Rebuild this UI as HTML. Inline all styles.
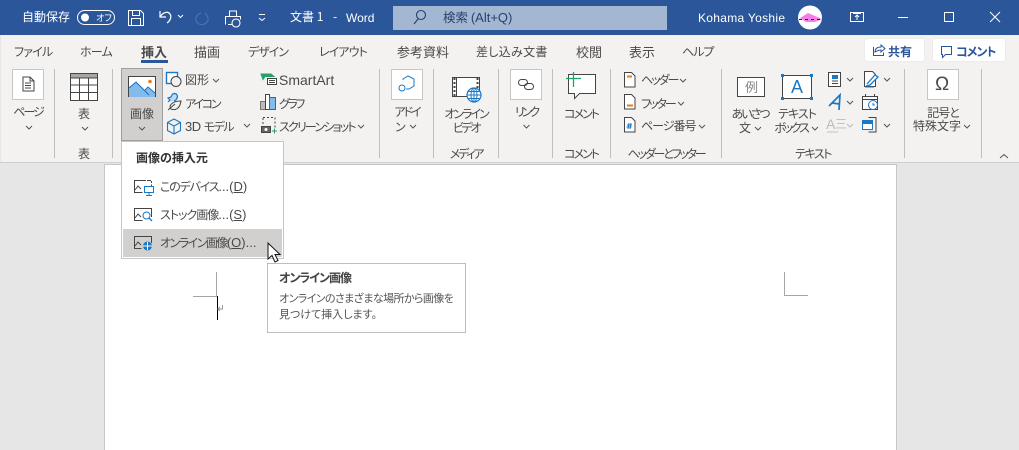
<!DOCTYPE html>
<html lang="ja"><head><meta charset="utf-8"><style>
html,body{margin:0;padding:0}
#r{position:relative;width:1019px;height:450px;overflow:hidden;background:#e6e6e6;font-family:"Liberation Sans","Noto Sans CJK JP",sans-serif;color:#4a4a4a}
#r div{position:absolute}
.t{white-space:nowrap;font-size:12px;line-height:16px;font-family:"Noto Sans CJK JP","Liberation Sans",sans-serif;font-feature-settings:"palt"}
.c{text-align:center;transform:translateX(-50%)}
.w{color:#fff}
.l,.l2{font-family:"Liberation Sans","Noto Sans CJK JP",sans-serif}
.l2{font-size:13px;letter-spacing:0}
u{text-underline-offset:1px}
svg{position:absolute;left:0;top:0}
</style></head><body><div id="r">
<div style="left:0;top:0;width:1019px;height:35px;background:#2b579a"></div>
<div style="left:1px;top:35px;width:1018px;height:127px;background:#f3f2f1"></div>
<div style="left:0;top:162px;width:1019px;height:1px;background:#d0cfce"></div>
<div style="left:105px;top:165px;width:791px;height:290px;background:#fff;outline:1px solid #c6c6c6"></div>
<div style="left:393px;top:6px;width:274px;height:24px;background:#a3b7d2"></div>
<div style="left:865px;top:39px;width:59px;height:22px;background:#fff;border-radius:2px;box-shadow:0 0 1px #ccc"></div>
<div style="left:933px;top:39px;width:72px;height:22px;background:#fff;border-radius:2px;box-shadow:0 0 1px #ccc"></div>
<div style="left:141px;top:60px;width:27px;height:3px;background:#2b579a"></div>
<div style="left:121px;top:68px;width:40px;height:71px;background:#d2d0ce;border:1px solid #a19f9d"></div>

<svg width="1019" height="450" fill="none" stroke-width="1">
<!-- titlebar icons -->
<g stroke="#fff">
<rect x="77.500" y="10.500" width="37" height="14" rx="7"/>
<circle cx="85" cy="17.500" r="3.500" fill="#fff"/>
<path d="M128.500 10.500h12l3 3v12h-15zM132.500 10.500v5h7v-5M131.500 25.500v-7h9v7"/>
<path d="M160 11v6h6M160 17c3-5 8-6 10-3 2 3 0 7-3 9" stroke-width="1.200"/>
<path d="M178 15l2.500 2.500 2.500-2.500M259 14.500h6M259 18l3 2.500 3-2.500"/>
<path d="M229.500 16v-5h7v5M225.500 24.500v-8h15v3M228 24.500h4"/>
<circle cx="236" cy="23" r="4" stroke-width="1.100"/>
<rect x="850.500" y="12.500" width="13" height="9"/>
<path d="M853 13.500h8M857 20v-5m-2 2l2-2 2 2" stroke-width="1"/>
<path d="M898 17.500h10"/><rect x="944.500" y="12.500" width="9" height="9"/>
<path d="M990 12l10 10m0-10l-10 10"/>
</g>
<path d="M201 13c-6 2-7 8-2 11 5 2 10-2 9-6-.5-2-1-3-3-5" stroke="#4b73ad" stroke-width="1.200"/>
<circle cx="810" cy="17.500" r="12" fill="#fff"/>
<path d="M800 18l5-3 3-2 7 3 7 3-7 3h-9z" fill="#f57de8"/><path d="M799 19.500h23" stroke="#222" stroke-dasharray="3 3"/>
<circle cx="421" cy="15" r="4.500" stroke="#27426e" stroke-width="1.100"/><path d="M418 19l-4 5" stroke="#27426e" stroke-width="1.200"/>
<!-- share / comment -->
<path d="M873.500 47v8.500h10v-3M875 52c0-4 3-5 6-5v-2l4 3.500-4 3.500v-2c-3 0-4 1-6 2z" stroke="#2b579a"/>
<path d="M941.500 46.500h10v8h-6l-3 3v-3h-1z" stroke="#2b579a"/>
<!-- separators -->
<g fill="#c0bfbe" stroke="none"><rect x="54" y="69" width="1" height="89"/><rect x="112" y="69" width="1" height="89"/><rect x="379" y="69" width="1" height="89"/><rect x="433" y="69" width="1" height="89"/><rect x="498" y="69" width="1" height="89"/><rect x="552" y="69" width="1" height="89"/><rect x="610" y="69" width="1" height="89"/><rect x="721" y="69" width="1" height="89"/><rect x="904" y="69" width="1" height="89"/><rect x="981" y="69" width="1" height="89"/></g>
<!-- white icon boxes -->
<g fill="#fff" stroke="#c8c6c4"><rect x="12.500" y="69.500" width="31" height="30"/><rect x="391.500" y="69.500" width="31" height="30"/><rect x="510.500" y="69.500" width="31" height="30"/><rect x="927.500" y="69.500" width="31" height="30"/></g>
<!-- page -->
<path d="M23 77h7l4 4v10H23zM30 77v4h4M25 83h6M25 85.500h6M25 88h6" stroke="#444"/>
<!-- table -->
<rect x="70.500" y="73.500" width="27" height="27" stroke="#444" fill="#fff"/><rect x="71" y="74" width="26" height="4" fill="#a6a6a6"/>
<path d="M71 78h26M71 85h26M71 92.500h26M79.500 78v22M88.500 78v22" stroke="#444"/>
<!-- picture -->
<rect x="128.500" y="76.500" width="27" height="20" fill="#fff" stroke="#444"/>
<path d="M129 93v-6l7-5 9 8 3-3 7 6v4h-26z" fill="#83bcec"/><path d="M129 88l7-6 13 13M145 90l3-3 7 6" stroke="#1b6fb9"/>
<circle cx="150" cy="81.500" r="1.800" fill="#e97b1c"/>
<!-- shapes -->
<rect x="166.500" y="72.500" width="11" height="11" fill="#fff" stroke="#1b78c4" stroke-width="1.400"/><circle cx="176" cy="81.500" r="5" fill="#f3f2f1" stroke="#444"/>
<!-- icons -->
<path d="M174 101c3-1 4-4 3-6-1-2-4-2-5 0l-1 2-3 1 2 2-2 2" fill="#bcdcf5" stroke="#1b78c4" stroke-width="1.200"/><path d="M171 109c-3-3 1-8 10-8-1 7-5 10-10 8zm-3 1l7-6" fill="#f3f2f1" stroke="#444"/>
<!-- 3d -->
<path d="M174 119l6.500 3.500v8l-6.500 3.500-6.500-3.500v-8zM167.500 122.500l6.500 3.500 6.500-3.500M174 126v8" stroke="#1b78c4" stroke-width="1.100"/>
<!-- smartart -->
<path d="M261 74h10l3 2.500h-9l-2 3z" fill="#21a366" stroke="#21a366"/><rect x="267.500" y="78.500" width="9" height="6" fill="#fff" stroke="#444"/><path d="M269 80.500h6M269 82.500h6" stroke="#444"/>
<!-- chart -->
<rect x="260.500" y="101.500" width="5" height="8" fill="#bbb" stroke="#777"/><rect x="265.500" y="94.500" width="4" height="15" fill="#fff" stroke="#444"/><rect x="269.500" y="97.500" width="6" height="12" fill="#83bcec" stroke="#1b6fb9"/>
<!-- screenshot -->
<path d="M263 117.500h12v10" stroke="#444" stroke-dasharray="2 2"/><path d="M263 118v6" stroke="#444" stroke-dasharray="2 2"/>
<rect x="261.500" y="126.500" width="9" height="6" fill="#666" stroke="#444"/><circle cx="266" cy="129.500" r="1.500" fill="#fff"/><path d="M272 131h5M274.500 128.500v5" stroke="#21a366"/>
<!-- addin -->
<path d="M403 80v-1l5-3 6 3v7l-5 3h-3" stroke="#1b78c4"/><circle cx="402" cy="88" r="3" stroke="#1b78c4"/>
<!-- video -->
<rect x="452.500" y="77.500" width="27" height="19" fill="#fff" stroke="#444"/><path d="M454.500 78v18M477.500 78v18" stroke="#444" stroke-width="2" stroke-dasharray="2 2"/><path d="M456.500 78v18" stroke="#444"/>
<circle cx="474" cy="95" r="7" fill="#fff" stroke="#1b78c4" stroke-width="1.200"/><path d="M467 95h14M474 88v14M468.500 91.500h11M468.500 98.500h11" stroke="#1b78c4"/><ellipse cx="474" cy="95" rx="3" ry="7" stroke="#1b78c4"/>
<!-- link -->
<rect x="518.500" y="79.500" width="9" height="6" rx="3" stroke="#444"/><rect x="524.500" y="83.500" width="9" height="6" rx="3" stroke="#444"/>
<!-- comment -->
<path d="M568.500 74.500h27v19h-16l-5 5v-5h-6z" fill="#fff" stroke="#444"/><path d="M566 78.500h15M573.500 72v15" stroke="#21a366" stroke-width="1.300"/>
<!-- header/footer/page no -->
<g fill="#fff" stroke="#444"><path d="M624.500 72.500h7l3.500 3.500v11h-10.500z"/><path d="M624.500 94.500h7l3.500 3.500v11h-10.500z"/><path d="M624.500 117.500h7l3.500 3.500v11h-10.500z"/></g>
<path d="M627 76.500h5" stroke="#e97b1c" stroke-width="2"/><path d="M627 105.500h6" stroke="#e97b1c" stroke-width="2"/>
<path d="M629 123l-1 6M631 123l-1 6M627 125h5M626.500 127h5" stroke="#1b78c4"/>
<!-- text group -->
<rect x="737.500" y="77.500" width="27" height="19" fill="#fff" stroke="#444"/>
<rect x="782.500" y="75.500" width="29" height="23" fill="#fff" stroke="#444"/>
<g fill="#1b78c4"><rect x="781" y="74" width="3" height="3"/><rect x="810" y="74" width="3" height="3"/><rect x="781" y="97" width="3" height="3"/><rect x="810" y="97" width="3" height="3"/></g>
<path d="M828.500 72.500h12v14h-12z" fill="#fff" stroke="#444"/><rect x="832" y="75" width="6" height="4" fill="#1b78c4"/><path d="M832 81h6M832 83.500h6" stroke="#444"/>
<path d="M829 106l11-11-1 15M832.500 103l6.500 1" stroke="#1b78c4" stroke-width="1.700"/>
<path d="M827 132h11" stroke="#c0bfbe"/>
<path d="M864.500 71.500h8l3 3v12h-11z" fill="#fff" stroke="#444"/><path d="M867 84l8-9 3 2-8 8-4 1" fill="#fff" stroke="#1b78c4" stroke-width="1.300"/><path d="M865 87h9" stroke="#1b78c4"/>
<rect x="862.500" y="96.500" width="15" height="13" fill="#fff" stroke="#444"/><path d="M863 99.500h14M865.500 94v3M874.500 94v3" stroke="#444"/><circle cx="873" cy="105" r="4.500" fill="#fff" stroke="#1b78c4"/><path d="M873 103v2h2" stroke="#1b78c4"/>
<path d="M868.500 117.500h7.500v14.500h-7.500" stroke="#444"/><rect x="862.500" y="120.500" width="10" height="9" fill="#fff" stroke="#1b78c4"/><rect x="863" y="121" width="9" height="3" fill="#1b78c4"/>
<!-- chevrons -->
<g stroke="#555"><path d="M26 126l3 3 3-3M82 127l3 3 3-3M139 127l3 3 3-3M213 79l3 3 3-3M244 124l3 3 3-3M358 125l3 3 3-3M410 125l3 3 3-3M523.500 125l3 3 3-3M680 79l3 3 3-3M678 102l3 3 3-3M699 125l3 3 3-3M755 127l3 3 3-3M812 127l3 3 3-3M847 78l3 3 3-3M847 101l3 3 3-3M884 78l3 3 3-3M884 124l3 3 3-3M964 125l3 3 3-3M1000 158l4-3.500 4 3.500"/></g><path d="M847 124l3 3 3-3" stroke="#bbb"/>
</svg>

<div class="t w" style="left:22px;top:9px">自動保存</div>
<div class="t w" style="left:96px;top:11px;font-size:9px;line-height:13px">オフ</div>
<div class="t w" style="left:290px;top:9px">文書 1</div>
<div class="t w" style="left:333px;top:9px">-</div>
<div class="t w l" style="left:346px;top:10px">Word</div>
<div class="t" style="left:443px;top:9px;color:#27426e;font-size:12.500px">検索 <span class="l2" style="color:#27426e">(Alt+Q)</span></div>
<div class="t w l" style="left:698px;top:10px;letter-spacing:.3px">Kohama Yoshie</div>

<div class="t" style="left:14px;top:44px;letter-spacing:-.8px">ファイル</div>
<div class="t" style="left:80px;top:44px;letter-spacing:-.8px">ホーム</div>
<div class="t" style="left:141px;top:44px;font-size:13px;font-weight:700">挿入</div>
<div class="t" style="left:194px;top:44px;font-size:13px">描画</div>
<div class="t" style="left:248px;top:44px;letter-spacing:-1px">デザイン</div>
<div class="t" style="left:319px;top:44px;letter-spacing:-.9px">レイアウト</div>
<div class="t" style="left:397px;top:44px;font-size:13px">参考資料</div>
<div class="t" style="left:476px;top:44px;letter-spacing:.3px">差し込み文書</div>
<div class="t" style="left:576px;top:44px;font-size:13px">校閲</div>
<div class="t" style="left:629px;top:44px;font-size:13px">表示</div>
<div class="t" style="left:682px;top:44px;letter-spacing:-1px">ヘルプ</div>
<div class="t" style="left:888px;top:44px;font-weight:700;color:#2b579a">共有</div>
<div class="t" style="left:956px;top:44px;font-weight:700;color:#2b579a;letter-spacing:-1px">コメント</div>

<div class="t c" style="left:28px;top:104px;letter-spacing:-2px">ページ</div>
<div class="t c" style="left:84px;top:106px">表</div>
<div class="t c" style="left:84px;top:146px">表</div>
<div class="t c" style="left:142px;top:106px">画像</div>
<div class="t" style="left:185px;top:72px">図形</div>
<div class="t" style="left:185px;top:96px;letter-spacing:-2.200px">アイコン</div>
<div class="t l" style="left:185px;top:119px;font-size:13px;letter-spacing:-.5px">3D <span class="t" style="position:static;letter-spacing:-1.500px;font-size:12px">モデル</span></div>
<div class="t l" style="left:279px;top:72px;font-size:14px">SmartArt</div>
<div class="t" style="left:279px;top:96px;letter-spacing:-2.500px">グラフ</div>
<div class="t" style="left:279px;top:119px;letter-spacing:-1.800px">スクリーンショット</div>
<div class="t c" style="left:407px;top:104px;letter-spacing:-2px">アドイ</div>
<div class="t" style="left:395px;top:119px">ン</div>
<div class="t c" style="left:466px;top:106px;letter-spacing:-2px">オンライン</div>
<div class="t c" style="left:466px;top:120px;letter-spacing:-2.300px">ビデオ</div>
<div class="t c" style="left:466px;top:146px;letter-spacing:-2.200px">メディア</div>
<div class="t c" style="left:526px;top:104px;letter-spacing:-3px">リンク</div>
<div class="t c" style="left:581px;top:106px;letter-spacing:-2px">コメント</div>
<div class="t c" style="left:581px;top:146px;letter-spacing:-2px">コメント</div>
<div class="t" style="left:641px;top:72px;letter-spacing:-2px">ヘッダー</div>
<div class="t" style="left:641px;top:96px;letter-spacing:-2px">フッター</div>
<div class="t" style="left:641px;top:118px;letter-spacing:-1px">ページ番号</div>
<div class="t c" style="left:666px;top:146px;letter-spacing:-2.200px">ヘッダーとフッター</div>
<div class="t c" style="left:750px;top:106px;letter-spacing:-2px">あいさつ</div>
<div class="t" style="left:739px;top:120px">文</div>
<div class="t c" style="left:797px;top:106px;letter-spacing:-1px">テキスト</div>
<div class="t c" style="left:791px;top:120px;letter-spacing:-2.200px">ボックス</div>
<div class="t c" style="left:813px;top:146px;letter-spacing:-1.500px">テキスト</div>
<div class="t c" style="left:943px;top:105px;letter-spacing:-1px">記号と</div>
<div class="t" style="left:913px;top:118px">特殊文字</div>
<div class="t" style="left:745px;top:79px;font-size:13px;color:#888">例</div>
<div class="t l" style="left:791px;top:77px;font-size:18px;line-height:20px;color:#1b78c4">A</div>
<div class="t l" style="left:826px;top:116px;font-size:14px;color:#bbb">A</div>
<div class="t" style="left:835px;top:116px;font-size:12px;color:#bbb">三</div>
<div class="t l" style="left:935px;top:75px;font-size:19px;line-height:20px">Ω</div>

<!-- dropdown -->
<div style="left:121px;top:141px;width:161px;height:116px;background:#fff;border:1px solid #c8c6c4"></div>
<div style="left:123px;top:229px;width:159px;height:28px;background:#d2d0ce"></div>
<div class="t" style="left:136px;top:150px;font-weight:700;color:#333">画像の挿入元</div>
<div class="t" style="left:160px;top:179px;letter-spacing:-1.200px">このデバイス<span class="l2">...(<u>D</u>)</span></div>
<div class="t" style="left:160px;top:207px;letter-spacing:-1px">ストック画像<span class="l2">...(<u>S</u>)</span></div>
<div class="t" style="left:160px;top:235px;letter-spacing:-1.500px">オンライン画像<span class="l2">(<u>O</u>)...</span></div>
<!-- tooltip -->
<div style="left:267px;top:263px;width:197px;height:68px;background:#fff;border:1px solid #bdbdbd"></div>
<div class="t" style="left:279px;top:270px;font-weight:700;color:#444;letter-spacing:-1px">オンライン画像</div>
<div class="t" style="left:279px;top:290px;font-size:11px;color:#555;letter-spacing:-.6px">オンラインのさまざまな場所から画像を</div>
<div class="t" style="left:279px;top:306px;font-size:11px;color:#555">見つけて挿入します。</div>

<svg width="1019" height="450" fill="none">
<!-- menu icons -->
<g stroke="#444">
<path d="M146 180.500h-11.500v12h8"/><path d="M135 190l3-4 3 3"/><path d="M151.500 181v5" stroke-dasharray="2 1.500"/><path d="M147 180.500h4"/>
<path d="M151.500 217v-8.500h-17v12h8"/><path d="M135 218l3-4 3 3"/>
<path d="M151.500 243v-6.500h-17v12h7"/><path d="M135 246l3-4 3 3"/>
</g>
<rect x="144.500" y="186.500" width="9" height="6" fill="#fff" stroke="#1b78c4"/><path d="M149 193v2M146 195.500h6" stroke="#1b78c4"/>
<circle cx="146.500" cy="215.500" r="3.500" fill="#fff" stroke="#1b78c4"/><path d="M149 218l3 3" stroke="#1b78c4" stroke-width="1.300"/>
<circle cx="147.500" cy="246" r="4.500" fill="#1b78c4"/><path d="M143 246h9M147.500 242v8" stroke="#fff"/>
<!-- page margin crop marks -->
<path d="M216.500 272v24M193 296.500h24M784.500 272v24M784 295.500h24" stroke="#a6a6a6"/>
<path d="M217.500 296v24" stroke="#000" stroke-width="1"/>
<path d="M222.500 305v4h-4M220 307l-2 2 2 2" stroke="#999"/>
<!-- cursor -->
<path d="M268 243v16l4-3.500 3 6.500 3-1.500-3-6h5z" fill="#fff" stroke="#111" stroke-width="1"/>
</svg>
</div></body></html>
